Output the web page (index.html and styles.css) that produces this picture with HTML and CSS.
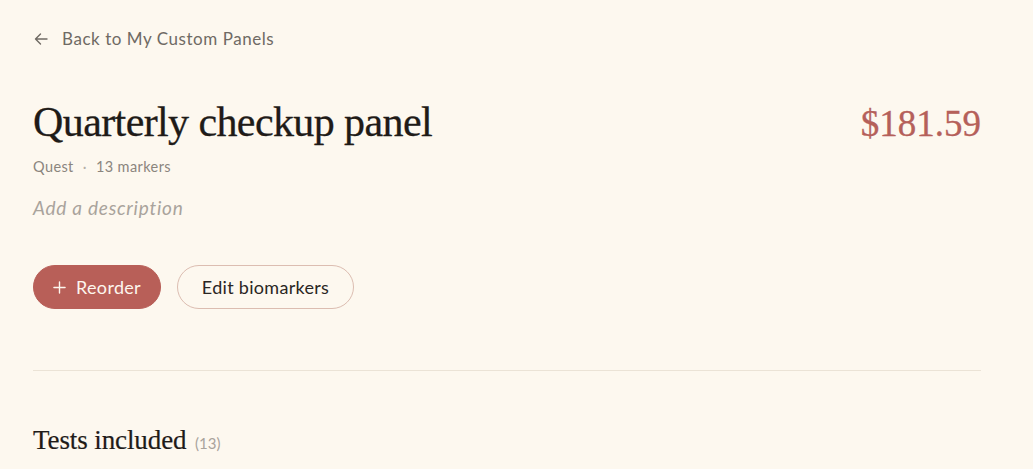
FILE: index.html
```html
<!DOCTYPE html>
<html lang="en">
<head>
<meta charset="utf-8">
<title>Quarterly checkup panel</title>
<link rel="stylesheet" href="styles.css">
</head>
<body>
<main class="page">
  <a class="back-link" href="#">
    <svg class="back-icon" viewBox="0 0 16 16" width="16" height="16" aria-hidden="true">
      <path d="M14 8H2.5M7.5 3L2.5 8l5 5" fill="none" stroke="currentColor" stroke-width="1.4" stroke-linecap="round" stroke-linejoin="round"/>
    </svg>
    <span>Back to My Custom Panels</span>
  </a>

  <header class="panel-header">
    <div class="panel-info">
      <h1 class="panel-title">Quarterly checkup panel</h1>
      <div class="panel-meta">
        <span>Quest</span>
        <span class="dot">·</span>
        <span>13 markers</span>
      </div>
      <p class="panel-desc">Add a description</p>
    </div>
    <div class="panel-price">$181.59</div>
  </header>

  <div class="actions">
    <button class="btn btn-primary" type="button">
      <svg viewBox="0 0 14 14" width="13" height="13" aria-hidden="true">
        <path d="M7 1v12M1 7h12" stroke="currentColor" stroke-width="1.5" stroke-linecap="round"/>
      </svg>
      <span>Reorder</span>
    </button>
    <button class="btn btn-outline" type="button">Edit biomarkers</button>
  </div>

  <hr class="divider">

  <h2 class="section-title">Tests included <span class="count">(13)</span></h2>
</main>
</body>
</html>
```

FILE: styles.css
```css
* {
  box-sizing: border-box;
}

html, body {
  margin: 0;
  background: #fdf8ef;
}

body {
  font-family: Lato, "Noto Sans", sans-serif;
  color: #2a2623;
}

.page {
  width: 948px;
  margin-left: 33px;
  padding-top: 28px;
}

.back-link {
  display: inline-flex;
  align-items: center;
  gap: 13px;
  color: #6f6a64;
  text-decoration: none;
  font-size: 17px;
  letter-spacing: 0.55px;
  line-height: 22px;
}

.back-icon {
  width: 16px;
  height: 16px;
}

.panel-header {
  display: flex;
  justify-content: space-between;
  align-items: flex-start;
  margin-top: 47px;
}

.panel-title {
  margin: 0;
  font-family: "Liberation Serif", "DejaVu Serif", serif;
  font-weight: 400;
  font-size: 42px;
  line-height: 50px;
  color: #1f1b18;
  letter-spacing: -0.6px;
  -webkit-text-stroke: 0.3px #1f1b18;
}

.panel-meta {
  display: flex;
  gap: 9px;
  margin-top: 10px;
  font-size: 14.5px;
  letter-spacing: 0.4px;
  line-height: 20px;
  color: #8b857e;
}

.panel-meta .dot {
  color: #b5afa8;
}

.panel-desc {
  margin: 19px 0 0;
  font-size: 19px;
  letter-spacing: 0.75px;
  line-height: 24px;
  font-style: italic;
  color: #a9a39c;
}

.panel-price {
  padding-top: 2px;
  font-family: "Liberation Serif", "DejaVu Serif", serif;
  font-size: 37px;
  line-height: 50px;
  color: #b5605a;
  -webkit-text-stroke: 0.3px #b5605a;
}

.actions {
  display: flex;
  gap: 16px;
  margin-top: 45px;
}

.btn {
  display: inline-flex;
  align-items: center;
  justify-content: center;
  gap: 10px;
  height: 44px;
  border-radius: 22px;
  font-family: Lato, "Noto Sans", sans-serif;
  font-size: 18px;
  letter-spacing: 0.3px;
  cursor: pointer;
}

.btn-primary {
  width: 128px;
  background: #b85f58;
  border: 1px solid #b85f58;
  color: #fdf6ee;
}

.btn-outline {
  width: 177px;
  background: transparent;
  border: 1.5px solid #dcbdb1;
  color: #2a2623;
}

.divider {
  margin: 61px 0 0;
  border: 0;
  border-top: 1px solid #ebe3d6;
}

.section-title {
  margin: 51px 0 0;
  font-family: "Liberation Serif", "DejaVu Serif", serif;
  font-weight: 400;
  font-size: 27px;
  line-height: 36px;
  letter-spacing: -0.1px;
  color: #1f1b18;
  -webkit-text-stroke: 0.2px #1f1b18;
}

.section-title .count {
  margin-left: 2px;
  font-family: Lato, "Noto Sans", sans-serif;
  font-size: 15px;
  letter-spacing: 0;
  color: #a9a39c;
  -webkit-text-stroke: 0;
}
```
